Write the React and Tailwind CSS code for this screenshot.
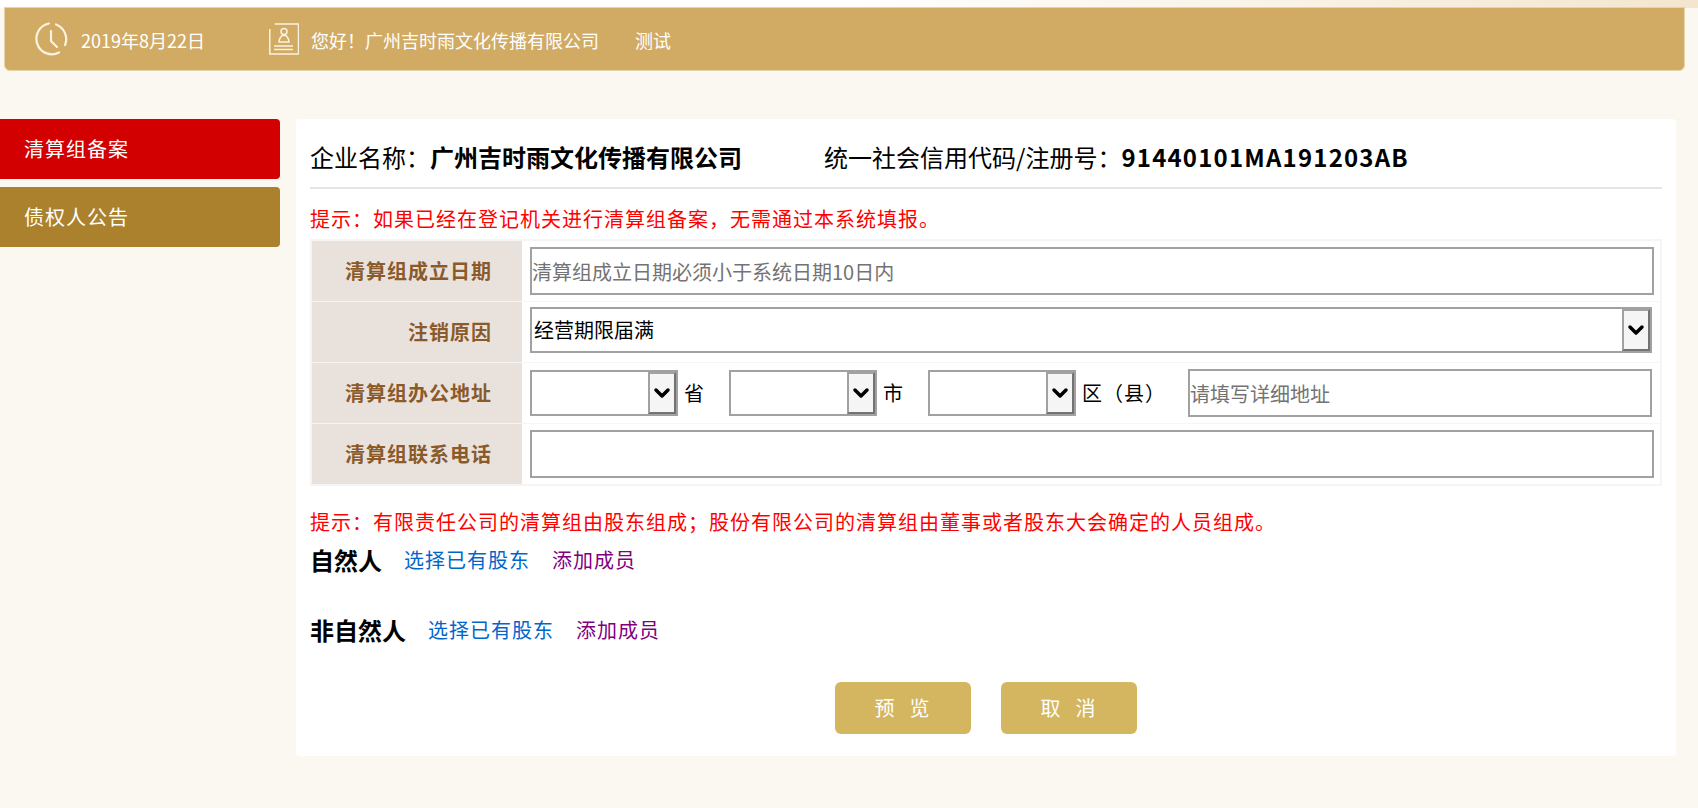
import React from 'react';
import { ChevronDown } from 'lucide-react';

const ClockIcon = () => (
  <svg viewBox="0 0 36 36" className="h-9 w-9" fill="none" stroke="#fbf3e1" strokeWidth="2.2" strokeLinecap="round">
    <path d="M16 2.5A15.5 15.5 0 1 0 26 31.5" />
    <path d="M23 3.5A15.5 15.5 0 0 1 32 24" />
    <path d="M18 10v10l6 6" />
  </svg>
);

const BadgeIcon = () => (
  <svg viewBox="0 0 30 32" className="h-8 w-7.5" fill="none" stroke="#fbf3e1" strokeWidth="1.5">
    <path d="M5.7 1H29.5V31H.8V6" />
    <circle cx="15" cy="8.5" r="3" />
    <path d="M10 19h10c0-4-2-5-3-6.5h-4c-1 1.5-3 2.5-3 6.5z" />
    <path d="M5 23h19M5 26.5h19" />
  </svg>
);

const Select = ({ value, className }) => (
  <div className={`relative ${className}`}>
    <select
      defaultValue={value}
      className="h-full w-full appearance-none border-2 border-neutral-400 bg-white pl-0.5 tracking-normal text-black outline-none"
    >
      <option>{value}</option>
    </select>
    <span className="absolute inset-y-0.5 right-0.5 flex w-7 items-center justify-center border-2 border-t-neutral-400 border-r-neutral-500 border-b-neutral-500 border-l-neutral-400 bg-neutral-100">
      <ChevronDown className="h-6 w-6 text-black" strokeWidth={3.5} />
    </span>
  </div>
);

const Field = ({ placeholder, className = 'w-full' }) => (
  <input
    placeholder={placeholder}
    className={`border-2 border-neutral-400 bg-white tracking-normal text-black outline-none placeholder:text-neutral-500 ${className}`}
  />
);

const Row = ({ label, children }) => (
  <div className="box-content flex h-15 border-b border-neutral-100 last:border-b-0">
    <div className="flex w-52.5 items-center justify-end bg-[#e9e2dc] pr-7.5 font-bold text-[#8a5a2b]">
      {label}
    </div>
    <div className="flex flex-1 items-center gap-1.5 pr-1.5 pl-2">{children}</div>
  </div>
);

const Members = ({ title, className }) => (
  <div className={`flex items-center gap-5.5 ${className}`}>
    <b className="text-2xl tracking-normal text-black">{title}</b>
    <a className="text-[#0066cc]">选择已有股东</a>
    <a className="text-[#800080]">添加成员</a>
  </div>
);

const App = () => {
  return (
    <div className="min-h-screen bg-[#fbf8f1] font-['Noto_Sans_CJK_SC',sans-serif]">
      <div className="h-2 bg-gradient-to-r from-white via-white to-[#f3e6cf]" />
      <header className="mx-1 -mt-px flex h-16 w-[1681px] items-center rounded-b-md border border-[#e5d3a9] bg-[#d1ab63] pl-7 text-lg text-white">
        <ClockIcon />
        <span className="ml-3 pt-0.5">2019年8月22日</span>
        <span className="ml-16"><BadgeIcon /></span>
        <span className="ml-3 pt-0.5">您好！广州吉时雨文化传播有限公司</span>
        <span className="ml-9 pt-0.5">测试</span>
      </header>

      <div className="mt-12 flex gap-4 text-xl tracking-wider">
        <aside className="flex w-70 flex-col gap-2 text-white">
          <a className="flex h-15 items-center rounded-r-sm bg-[#d20000] pl-6">清算组备案</a>
          <a className="flex h-15 items-center rounded-r-sm bg-[#ab812e] pl-6">债权人公告</a>
        </aside>

        <main className="flex h-[637px] w-[1380px] flex-col rounded-sm bg-white px-3.5">
          <div className="flex h-17.5 items-center gap-20.5 border-b-2 border-neutral-200 pt-2 text-2xl tracking-normal text-black">
            <div>
              企业名称：<b>广州吉时雨文化传播有限公司</b>
            </div>
            <div>
              统一社会信用代码/注册号：<b className="tracking-wider">91440101MA191203AB</b>
            </div>
          </div>

          <p className="mt-4 text-[#ff0000]">提示：如果已经在登记机关进行清算组备案，无需通过本系统填报。</p>

          <div className="mt-1.5 border-2 border-neutral-100">
            <Row label="清算组成立日期">
              <Field className="h-12 w-full" placeholder="清算组成立日期必须小于系统日期10日内" />
            </Row>
            <Row label="注销原因">
              <Select className="mr-0.5 mb-1 h-11.5 flex-1" value="经营期限届满" />
            </Row>
            <Row label="清算组办公地址">
              <Select className="h-11.5 w-37" />
              <span className="mr-4.5">省</span>
              <Select className="h-11.5 w-37" />
              <span className="mr-4.5">市</span>
              <Select className="h-11.5 w-37" />
              <span className="mr-4">区（县）</span>
              <Field className="mr-0.5 h-12 flex-1" placeholder="请填写详细地址" />
            </Row>
            <Row label="清算组联系电话">
              <Field className="h-12 w-full" />
            </Row>
          </div>

          <p className="mt-5.5 text-[#ff0000]">提示：有限责任公司的清算组由股东组成；股份有限公司的清算组由董事或者股东大会确定的人员组成。</p>

          <Members title="自然人" className="mt-2" />
          <Members title="非自然人" className="mt-9.5" />

          <div className="mt-9 flex justify-center gap-7.5">
            <button className="h-13 w-34 rounded-md bg-[#d4b660] tracking-widest text-white">预&nbsp;&nbsp;览</button>
            <button className="h-13 w-34 rounded-md bg-[#d4b660] tracking-widest text-white">取&nbsp;&nbsp;消</button>
          </div>
        </main>
      </div>
    </div>
  );
};

export default App;
